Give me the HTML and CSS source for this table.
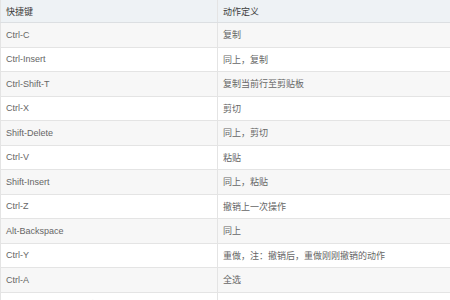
FILE: index.html
```html
<!DOCTYPE html>
<html lang="zh">
<head>
<meta charset="utf-8">
<link rel="stylesheet" href="styles.css">
</head>
<body>
<table class="keys">
  <thead>
    <tr class="head"><th>快捷键</th><th>动作定义</th></tr>
  </thead>
  <tbody>
    <tr><td>Ctrl-C</td><td>复制</td></tr>
    <tr><td>Ctrl-Insert</td><td>同上，复制</td></tr>
    <tr><td>Ctrl-Shift-T</td><td>复制当前行至剪贴板</td></tr>
    <tr><td>Ctrl-X</td><td>剪切</td></tr>
    <tr><td>Shift-Delete</td><td>同上，剪切</td></tr>
    <tr><td>Ctrl-V</td><td>粘贴</td></tr>
    <tr><td>Shift-Insert</td><td>同上，粘贴</td></tr>
    <tr><td>Ctrl-Z</td><td>撤销上一次操作</td></tr>
    <tr><td>Alt-Backspace</td><td>同上</td></tr>
    <tr><td>Ctrl-Y</td><td>重做，注：撤销后，重做刚刚撤销的动作</td></tr>
    <tr><td>Ctrl-A</td><td>全选</td></tr>
    <tr class="faded"><td>Ctrl-Shift-Y 转换选中内容为大写</td><td>大写</td></tr>
  </tbody>
</table>
</body>
</html>
```

FILE: styles.css
```css
html, body {
  margin: 0;
  padding: 0;
  background: #ffffff;
  overflow: hidden;
}
.keys {
  width: 451px;
  border-collapse: collapse;
  table-layout: fixed;
  font-family: "Liberation Sans", "Noto Sans CJK SC", sans-serif;
  font-size: 9px;
  color: #666666;
}
.keys th, .keys td {
  text-align: left;
  font-weight: normal;
  padding: 0 0 0 5px;
  border-bottom: 1px solid #e4e4e4;
  border-left: 1px solid #e4e4e4;
  white-space: nowrap;
  overflow: hidden;
}
.keys th:first-child, .keys td:first-child {
  width: 211px;
}
.head th {
  height: 22px;
  background: #eef2f5;
  color: #3c3c3c;
  border-bottom-color: #dcdfe2;
}
.keys tbody tr {
  height: 24.5px;
}
.keys tbody tr:nth-child(odd) {
  background: #f7f7f7;
}
.faded td {
  color: #e0e0e0;
}
```
